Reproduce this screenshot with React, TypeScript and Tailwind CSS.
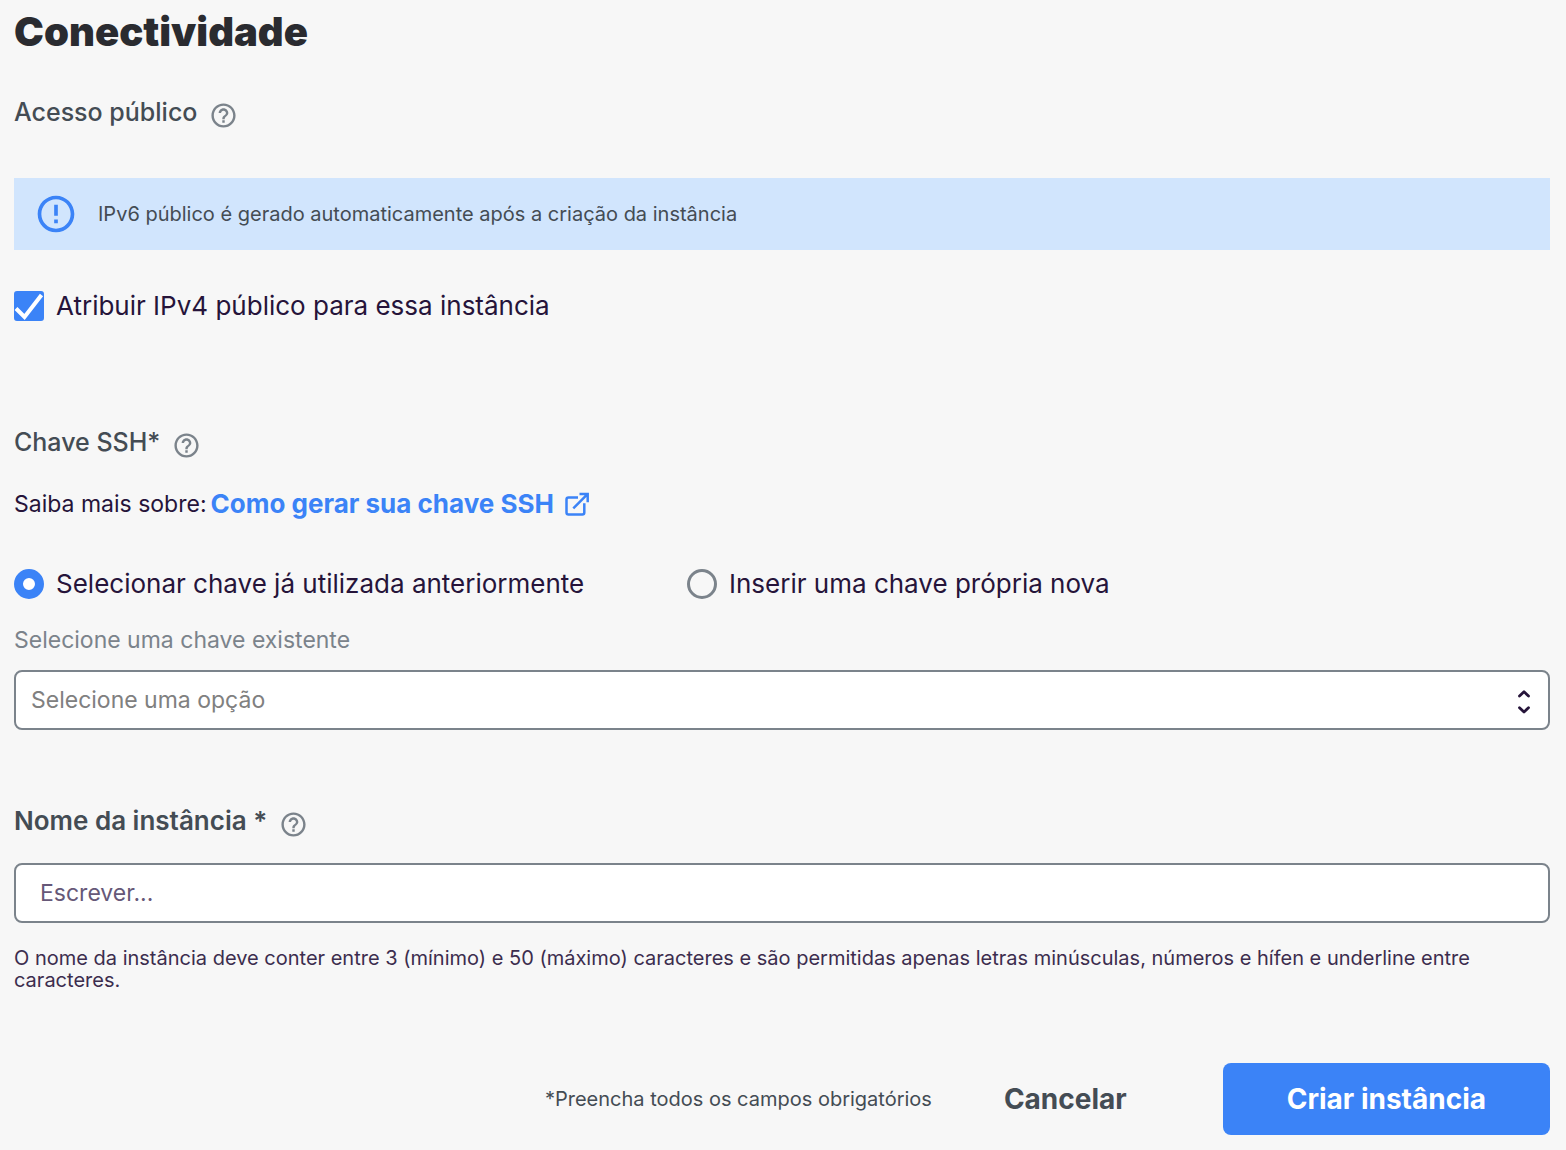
import { useState } from "react";
import type { ReactNode } from "react";
import { MdErrorOutline, MdHelpOutline } from "react-icons/md";

function FieldTitle({ htmlFor, help, children }: { htmlFor?: string; help: string; children: ReactNode }) {
  return (
    <div className="flex items-center gap-3">
      {htmlFor ? (
        <label htmlFor={htmlFor} className="text-[26px] leading-9 font-semibold text-[#444c54]">{children}</label>
      ) : (
        <h2 className="text-[25px] leading-9 font-medium text-[#444c54]">{children}</h2>
      )}
      <button type="button" aria-label={help} className="mt-1.5 text-[#7b838b]">
        <MdHelpOutline size={29} />
      </button>
    </div>
  );
}

function ExternalIcon() {
  return (
    <svg width="26" height="26" viewBox="0 0 26 26" fill="none" stroke="currentColor" strokeWidth="2.5" aria-hidden="true">
      <path d="M14 6.5H4.5a2 2 0 0 0-2 2v13a2 2 0 0 0 2 2h13.8a2 2 0 0 0 2-2V12.3" />
      <path d="M15.5 3H23.7V11.2M23.5 3.2L9.3 17.3" />
    </svg>
  );
}

function KeyOption({ label, checked, onChange }: { label: string; checked: boolean; onChange: () => void }) {
  return (
    <label className="flex items-center gap-3 text-[26px] leading-9 text-[#26143a]">
      <input
        type="radio"
        name="ssh-key"
        checked={checked}
        onChange={onChange}
        className="size-[30px] shrink-0 appearance-none rounded-full border-3 border-[#7b838b] bg-[#f7f7f7] checked:border-9 checked:border-[#3b83f7] checked:bg-white"
      />
      {label}
    </label>
  );
}

export default function App() {
  const [ipv4, setIpv4] = useState(true);
  const [source, setSource] = useState("existing");
  const [name, setName] = useState("");

  return (
    <main className="min-h-screen bg-[#f7f7f7] pt-2 pr-4 pb-4 pl-3.5 font-['Inter',sans-serif]">
      <form onSubmit={(e) => e.preventDefault()}>
        <h1 className="text-[40px] leading-12 font-black text-[#2a2b30]">Conectividade</h1>

        <section className="mt-9.5">
          <FieldTitle help="Ajuda sobre acesso público">Acesso público</FieldTitle>
          <div className="mt-12 flex h-[72px] items-center gap-5 bg-[#d1e5fd] px-5">
            <MdErrorOutline size={44} className="shrink-0 text-[#3b83f7]" aria-hidden="true" />
            <p className="text-xl text-[#444c54]">IPv6 público é gerado automaticamente após a criação da instância</p>
          </div>
          <label className="mt-9.5 flex items-center gap-3 text-[26px] leading-9 text-[#26143a]">
            <span className="relative size-[30px] shrink-0">
              <input
                type="checkbox"
                checked={ipv4}
                onChange={(e) => setIpv4(e.target.checked)}
                className="peer block size-[30px] appearance-none rounded-[3px] border-2 border-[#7b838b] bg-white checked:border-[#3b83f7] checked:bg-[#3b83f7]"
              />
              <svg viewBox="0 0 30 30" fill="none" stroke="white" strokeWidth="4" className="pointer-events-none absolute inset-0 hidden peer-checked:block" aria-hidden="true">
                <path d="M2 17.5L10.5 26L27.5 4" />
              </svg>
            </span>
            Atribuir IPv4 público para essa instância
          </label>
        </section>

        <section className="mt-25">
          <FieldTitle help="Ajuda sobre chave SSH">Chave SSH*</FieldTitle>
          <p className="mt-6.5 flex items-center gap-1 text-[23px] leading-9 text-[#26143a]">
            Saiba mais sobre:
            <a href="#chave-ssh" className="flex items-center gap-2.5 text-[26px] font-bold text-[#3b83f7]">
              Como gerar sua chave SSH
              <ExternalIcon />
            </a>
          </p>
          <div className="mt-11 flex flex-wrap gap-x-24">
            <div className="min-w-[577px]">
              <KeyOption label="Selecionar chave já utilizada anteriormente" checked={source === "existing"} onChange={() => setSource("existing")} />
            </div>
            <KeyOption label="Inserir uma chave própria nova" checked={source === "new"} onChange={() => setSource("new")} />
          </div>
          <label htmlFor="key" className="mt-6 block text-[23px] leading-7 text-[#7b838b]">Selecione uma chave existente</label>
          <div className="relative mt-4">
            <select id="key" defaultValue="" className="block h-15 w-full appearance-none rounded-lg border-2 border-[#7b838b] bg-white px-[15px] text-[23px] text-[#808080]">
              <option value="">Selecione uma opção</option>
            </select>
            <svg width="16" height="30" viewBox="0 0 16 30" fill="none" stroke="#26143a" strokeWidth="2.8" strokeLinecap="round" strokeLinejoin="round" className="pointer-events-none absolute top-4 right-[18px]" aria-hidden="true">
              <path d="M3.5 10L8 5.8L12.5 10M3.5 21.8L8 26L12.5 21.8" />
            </svg>
          </div>
        </section>

        <section className="mt-[73px]">
          <FieldTitle htmlFor="name" help="Ajuda sobre nome da instância">Nome da instância *</FieldTitle>
          <input
            id="name"
            type="text"
            value={name}
            onChange={(e) => setName(e.target.value)}
            placeholder="Escrever..."
            aria-describedby="name-hint"
            className="mt-6 block h-15 w-full rounded-lg border-2 border-[#7b838b] bg-white px-6 text-[23px] text-[#26143a] placeholder:text-[#665878]"
          />
          <p id="name-hint" className="mt-6 text-xl leading-[22px] text-[#3c2d4e]">
            O nome da instância deve conter entre 3 (mínimo) e 50 (máximo) caracteres e são permitidas apenas letras minúsculas, números e hífen e underline entre caracteres.
          </p>
        </section>

        <footer className="mt-18 flex items-center justify-end">
          <p className="mr-18 text-xl text-[#444c54]">*Preencha todos os campos obrigatórios</p>
          <button type="button" className="mr-24 text-[28px] font-bold text-[#444c54]">Cancelar</button>
          <button type="submit" className="h-[72px] rounded-lg bg-[#3b83f7] px-16 text-[28px] font-bold text-white">Criar instância</button>
        </footer>
      </form>
    </main>
  );
}
